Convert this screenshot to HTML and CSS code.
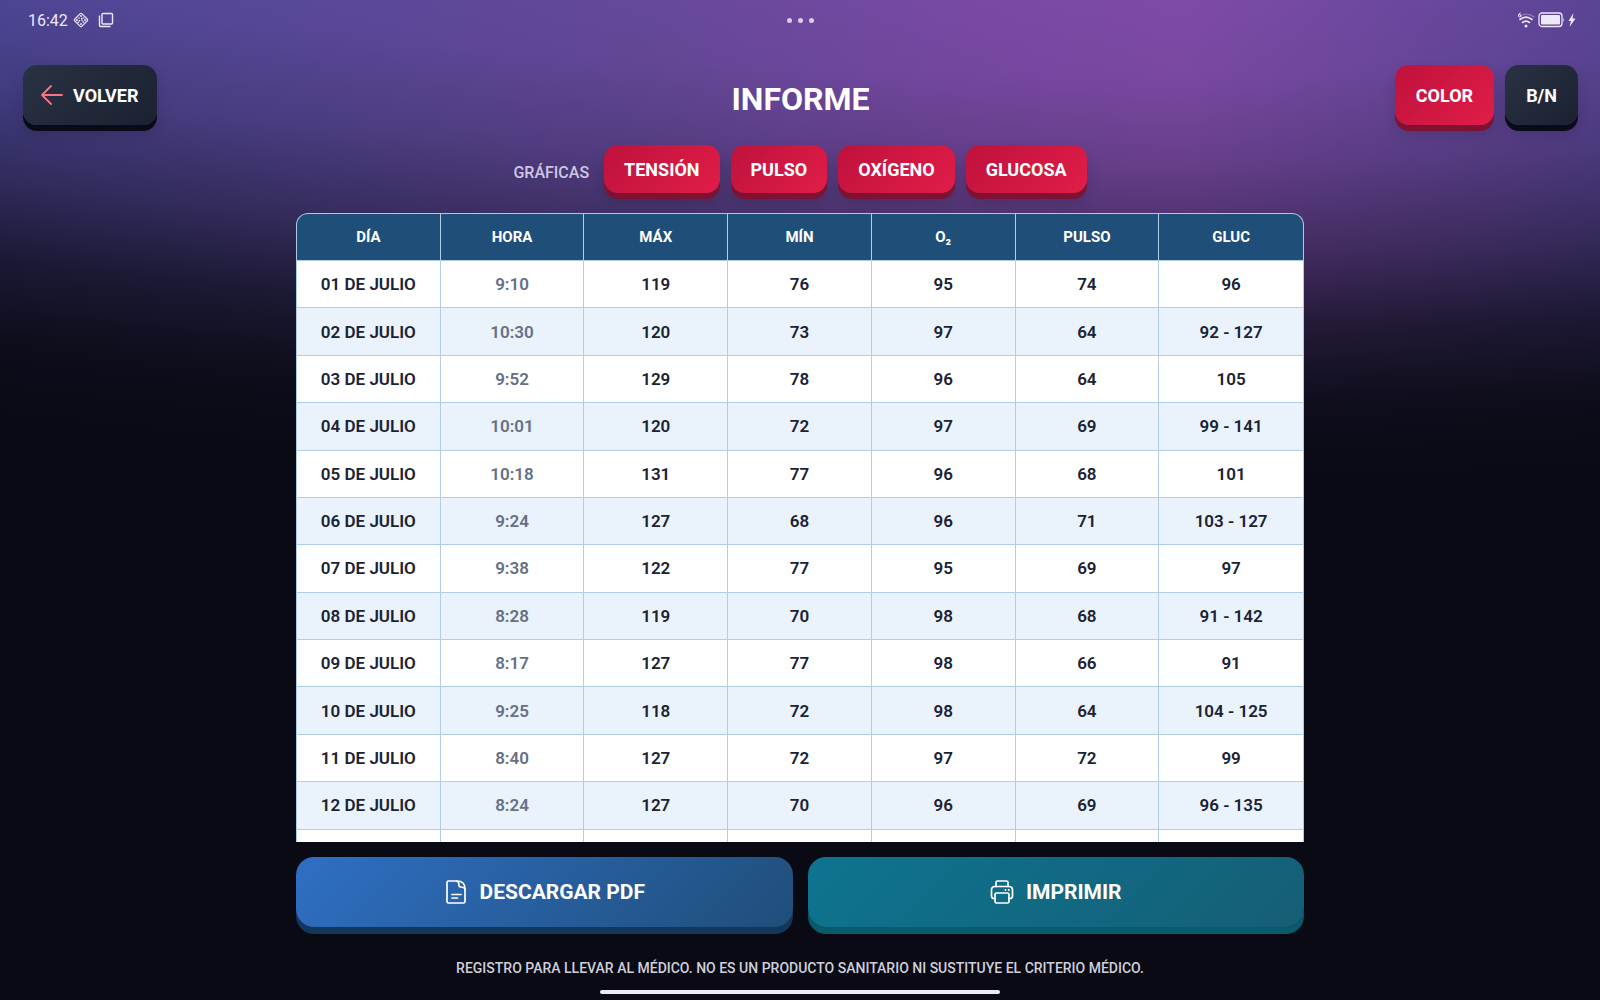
FILE: index.html
```html
<!DOCTYPE html>
<html lang="es">
<head>
    <meta charset="UTF-8">
    <meta name="viewport" content="width=device-width, initial-scale=1.0">
    <title>Informe</title>
    <link rel="stylesheet" href="styles.css">
</head>
<body>

    <!-- Status bar -->
    <div class="status-bar">
        <div class="status-left">
            <span class="clock">16:42</span>
            <svg class="status-icon" viewBox="0 0 16 16" fill="none" stroke="currentColor">
                <rect x="3" y="3" width="10" height="10" rx="1" transform="rotate(45 8 8)" stroke-width="1.2"/>
                <path d="M8 3v2M5.500 5.500l1 1M8 6.500h1.500M10.500 5.500v1M3 8h2M6.500 8v1.500M8.500 8.500l1-.5M11 8h2M5 10.500l1-.5M8 11v2M9.500 10h1.500" stroke-width="1.400"/>
            </svg>
            <svg class="status-icon status-copy" viewBox="0 0 16 16" fill="none" stroke="currentColor" stroke-width="1.4">
                <rect x="4" y="1.500" width="10.500" height="10.500" rx="1"/>
                <path d="M1.500 3.500v10a1 1 0 0 0 1 1h10"/>
            </svg>
        </div>
        <div class="status-dots"><i></i><i></i><i></i></div>
        <div class="status-right">
            <svg class="wifi" viewBox="0 0 18 17" fill="none" stroke="currentColor" stroke-linecap="round">
                <ellipse cx="2.800" cy="3.800" rx="1.300" ry="1.300" stroke-width="1"/>
                <path d="M1.500 3.500Q1.500 1.500 3.300 1" stroke-width="1"/>
                <path d="M6 2.700Q12 1 17 5" stroke-width="1.200" opacity=".35"/>
                <path d="M3 7.500Q9 2.800 15 7.500M5.500 10.500Q9 7.800 12.500 10.500" stroke-width="1.600"/>
                <circle cx="9" cy="14" r="1.500" fill="currentColor" stroke="none"/>
            </svg>
            <svg class="battery" viewBox="0 0 27 16">
                <rect x="1" y="1" width="23" height="13.500" rx="3" fill="none" stroke="currentColor" stroke-width="1.300"/>
                <rect x="3" y="3" width="19" height="9.500" rx="1" fill="currentColor"/>
                <path d="M25.200 5.500q1.500 2.200 0 4.500z" fill="currentColor"/>
            </svg>
            <svg class="bolt" viewBox="0 0 8 14" fill="currentColor">
                <path d="M5.500 0L.5 8h2.500L1.500 14l6-8.500H4.500z"/>
            </svg>
        </div>
    </div>

    <header class="top-bar">
        <button class="btn btn-dark btn-back" type="button">
            <svg class="icon-back" viewBox="0 0 22 20" fill="none" stroke="currentColor" stroke-width="1.800" stroke-linecap="round" stroke-linejoin="round">
                <path d="M21 10H1M10 1L1 10l9 9"/>
            </svg>
            VOLVER
        </button>
        <h1 class="title">INFORME</h1>
        <div class="modes">
            <button class="btn btn-red" type="button">COLOR</button>
            <button class="btn btn-dark" type="button">B/N</button>
        </div>
    </header>

    <nav class="charts">
        <span class="charts-label">GRÁFICAS</span>
        <button class="btn btn-red btn-small" type="button">TENSIÓN</button>
        <button class="btn btn-red btn-small" type="button">PULSO</button>
        <button class="btn btn-red btn-small" type="button">OXÍGENO</button>
        <button class="btn btn-red btn-small" type="button">GLUCOSA</button>
    </nav>

    <main class="report">
        <div class="table-wrap">
            <table class="records">
                <thead>
                    <tr><th>DÍA</th><th>HORA</th><th>MÁX</th><th>MÍN</th><th>O₂</th><th>PULSO</th><th>GLUC</th></tr>
                </thead>
                <tbody>
                    <tr><td>01 DE JULIO</td><td class="hour">9:10</td><td>119</td><td>76</td><td>95</td><td>74</td><td>96</td></tr>
                    <tr><td>02 DE JULIO</td><td class="hour">10:30</td><td>120</td><td>73</td><td>97</td><td>64</td><td>92 - 127</td></tr>
                    <tr><td>03 DE JULIO</td><td class="hour">9:52</td><td>129</td><td>78</td><td>96</td><td>64</td><td>105</td></tr>
                    <tr><td>04 DE JULIO</td><td class="hour">10:01</td><td>120</td><td>72</td><td>97</td><td>69</td><td>99 - 141</td></tr>
                    <tr><td>05 DE JULIO</td><td class="hour">10:18</td><td>131</td><td>77</td><td>96</td><td>68</td><td>101</td></tr>
                    <tr><td>06 DE JULIO</td><td class="hour">9:24</td><td>127</td><td>68</td><td>96</td><td>71</td><td>103 - 127</td></tr>
                    <tr><td>07 DE JULIO</td><td class="hour">9:38</td><td>122</td><td>77</td><td>95</td><td>69</td><td>97</td></tr>
                    <tr><td>08 DE JULIO</td><td class="hour">8:28</td><td>119</td><td>70</td><td>98</td><td>68</td><td>91 - 142</td></tr>
                    <tr><td>09 DE JULIO</td><td class="hour">8:17</td><td>127</td><td>77</td><td>98</td><td>66</td><td>91</td></tr>
                    <tr><td>10 DE JULIO</td><td class="hour">9:25</td><td>118</td><td>72</td><td>98</td><td>64</td><td>104 - 125</td></tr>
                    <tr><td>11 DE JULIO</td><td class="hour">8:40</td><td>127</td><td>72</td><td>97</td><td>72</td><td>99</td></tr>
                    <tr><td>12 DE JULIO</td><td class="hour">8:24</td><td>127</td><td>70</td><td>96</td><td>69</td><td>96 - 135</td></tr>
                    <tr><td></td><td></td><td></td><td></td><td></td><td></td><td></td></tr>
                </tbody>
            </table>
        </div>

        <div class="actions">
            <button class="btn btn-large btn-blue" type="button">
                <svg class="icon-action" viewBox="0 0 24 24" fill="none" stroke="currentColor" stroke-width="1.700" stroke-linecap="round" stroke-linejoin="round">
                    <path d="M13 1H4.500Q3 1 3 2.500v19Q3 23 4.500 23h15q1.500 0 1.500-1.500V9Q21 1 13 1z"/>
                    <path d="M13 1q2 1 2 4.500Q15 7 16.500 7 20.500 7 21 9.500M8 14.500h9M8 18h5.500"/>
                </svg>
                DESCARGAR PDF
            </button>
            <button class="btn btn-large btn-teal" type="button">
                <svg class="icon-action" viewBox="0 0 24 24" fill="none" stroke="currentColor" stroke-width="1.700" stroke-linecap="round" stroke-linejoin="round">
                    <path d="M6 6.500V2.500Q6 1 7.500 1h9Q18 1 18 2.500v4"/>
                    <path d="M5 18.500H4Q1.500 18.500 1.500 16v-6Q1.500 6.500 5 6.500h14q3.500 0 3.500 3.500v6q0 2.500-2.500 2.500h-1"/>
                    <path d="M6.500 13h11q1.500 0 1.500 1.500v7Q19 23 17.500 23h-11Q5 23 5 21.500v-7Q5 13 6.500 13z"/>
                    <path d="M15.500 10v.1M18.800 10v.1" stroke-width="2"/>
                </svg>
                IMPRIMIR
            </button>
        </div>
    </main>

    <footer class="notice">REGISTRO PARA LLEVAR AL MÉDICO. NO ES UN PRODUCTO SANITARIO NI SUSTITUYE EL CRITERIO MÉDICO.</footer>
    <div class="home-bar"></div>

</body>
</html>
```
FILE: styles.css
```css
* {
    box-sizing: border-box;
}

body {
    margin: 0;
    height: 100vh;
    display: flex;
    flex-direction: column;
    font-family: Roboto, "Liberation Sans", sans-serif;
    font-weight: 700;
    color: #fff;
    background:
        radial-gradient(ellipse 240% 150% at 69% -102%,
            rgba(9, 10, 20, 0) 68%,
            rgba(9, 10, 20, 0.04) 73%,
            rgba(9, 10, 20, 0.2) 79%,
            rgba(9, 10, 20, 0.47) 85%,
            rgba(9, 10, 20, 0.76) 90%,
            rgba(9, 10, 20, 0.94) 95%,
            rgb(9, 10, 20) 100%),
        linear-gradient(to right, #51499c 0%, #66499b 40%, #7849a4 60%, #7e4ba7 74%, #5b4596 100%);
}

/* Status bar */
.status-bar {
    display: grid;
    grid-template-columns: 1fr auto 1fr;
    align-items: center;
    height: 40px;
    padding: 0 24px;
    color: #f0e6fa;
}

.status-left,
.status-right {
    display: flex;
    align-items: center;
    gap: 5px;
}

.status-right {
    justify-content: flex-end;
    gap: 3px;
}

.clock {
    margin-left: 4px;
    font-size: 16px;
    font-weight: 400;
}

.status-icon {
    width: 16px;
    height: 16px;
}

.status-copy {
    margin-left: 4px;
}

.status-dots {
    display: flex;
    gap: 6px;
}

.status-dots i {
    width: 5px;
    height: 5px;
    border-radius: 50%;
    background: #dccbec;
}

.wifi {
    width: 18px;
    height: 17px;
}

.battery {
    width: 27px;
    height: 16px;
}

.bolt {
    width: 8px;
    height: 14px;
}

/* Buttons */
.btn {
    display: flex;
    align-items: center;
    justify-content: center;
    gap: 10px;
    height: 60px;
    padding: 0 21px;
    border: none;
    border-radius: 14px;
    font-family: inherit;
    font-size: 18px;
    font-weight: 700;
    color: #fff;
    cursor: pointer;
}

.btn-dark {
    background: linear-gradient(135deg, #293243, #1b2131);
    box-shadow: 0 6px 0 #090c18, 0 8px 14px rgba(0, 0, 0, 0.15);
}

.btn-red {
    background: linear-gradient(135deg, #be123c, #e11d48);
    box-shadow: 0 6px 0 #7f1233, 0 8px 14px rgba(0, 0, 0, 0.15);
}

.btn-back {
    padding: 0 18px;
}

.btn-small {
    height: 48px;
    padding: 0 20px;
}

.btn-large {
    flex: 1;
    height: 70px;
    gap: 12px;
    border-radius: 18px;
    font-size: 21px;
}

.btn-blue {
    background: linear-gradient(135deg, #2f6fc4, #1f4e79);
    box-shadow: 0 7px 0 #14365a;
}

.btn-teal {
    background: linear-gradient(135deg, #0e7490, #155e75);
    box-shadow: 0 7px 0 #075b6d;
}

.icon-back {
    width: 22px;
    height: 20px;
    color: #fb7185;
}

.icon-action {
    width: 24px;
    height: 24px;
}

/* Header */
.top-bar {
    display: grid;
    grid-template-columns: 1fr auto 1fr;
    align-items: start;
    padding: 25px 22px 0 23px;
}

.top-bar > .btn {
    justify-self: start;
}

.title {
    margin: 15px 0 0;
    font-size: 32px;
    line-height: 38px;
}

.modes {
    display: flex;
    justify-content: flex-end;
    gap: 11px;
}

.charts {
    display: flex;
    justify-content: center;
    align-items: center;
    gap: 11px;
    padding-top: 20px;
}

.charts-label {
    margin: 6px 4px 0 0;
    font-size: 16px;
    font-weight: 500;
    color: #cfc6e6;
}

/* Table */
.report {
    flex: 1;
    min-height: 0;
    display: flex;
    flex-direction: column;
    gap: 15px;
    width: 63%;
    margin: 20px auto 0;
}

.table-wrap {
    flex: 1;
    min-height: 0;
    overflow: hidden;
    border: 1px solid #a9cbe8;
    border-bottom: none;
    border-radius: 12px 12px 0 0;
}

.records {
    width: 100%;
    height: 663px;
    table-layout: fixed;
    border-collapse: separate;
    border-spacing: 0;
    text-align: center;
    background: #fff;
    color: #1a2233;
}

.records th,
.records td {
    height: 47px;
    padding: 0;
    border-right: 1px solid #b0cde9;
    border-bottom: 1px solid #b0cde9;
    font-size: 17px;
    font-weight: 600;
}

.records th {
    font-size: 15px;
    font-weight: 700;
    color: #fff;
    background: #1f4e79;
}

.records th:last-child,
.records td:last-child {
    border-right: none;
}

.records tbody tr:nth-child(even) {
    background: #eaf2fb;
}

.records .hour {
    color: #667085;
}

.actions {
    display: flex;
    gap: 15px;
    margin-bottom: 7px;
}

/* Footer */
.notice {
    margin-top: 24px;
    font-size: 14px;
    line-height: 20px;
    font-weight: 500;
    text-align: center;
    color: #cfd0dc;
}

.home-bar {
    width: 25%;
    height: 4px;
    margin: 12px auto 6px;
    border-radius: 2px;
    background: #ece6f5;
}
```
